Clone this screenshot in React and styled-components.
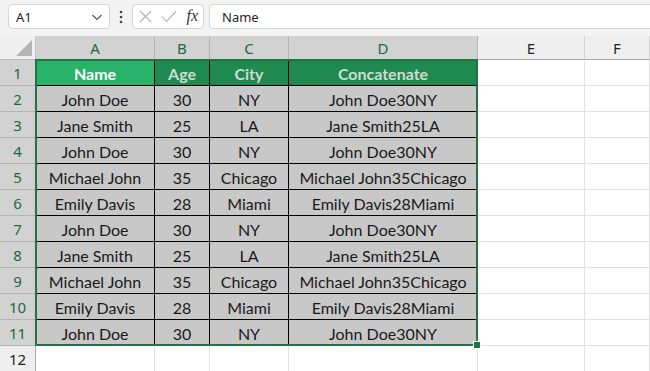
import React from "react";
import styled, { createGlobalStyle } from "styled-components";

const Global = createGlobalStyle`
  html, body { margin: 0; padding: 0; background: #ffffff; }
  body { font-family: "Lato", "Noto Sans", sans-serif; overflow: hidden; }
`;

const Root = styled.div`
  width: 650px;
  height: 371px;
  overflow: hidden;
  background: #ffffff;
`;

const FormulaBar = styled.div`
  height: 36px;
  box-sizing: border-box;
  background: #f3f3f3;
  display: flex;
  align-items: flex-start;
  padding: 4px 0 0 8px;
`;

const Box = styled.div`
  height: 25px;
  box-sizing: border-box;
  background: #ffffff;
  border: 1px solid #d6d6d6;
  border-radius: 4px;
  display: flex;
  align-items: center;
  font-family: "Noto Sans", "Open Sans", sans-serif;
  font-size: 13px;
  color: #1f1f1f;
`;

const NameBox = styled(Box)`
  width: 102px;
  padding: 0 6px 0 7px;
  justify-content: space-between;
`;

const FxBox = styled(Box)`
  width: 72px;
  padding: 0 5px 0 6px;
  justify-content: space-between;
`;

const FormulaInput = styled(Box)`
  flex: 1;
  margin-left: 5px;
  padding-left: 12px;
  border-right: none;
  border-radius: 4px 0 0 4px;
`;

const Dots = styled.div`
  width: 22px;
  height: 25px;
  display: flex;
  align-items: center;
  justify-content: center;
`;

const Fx = styled.span`
  font-family: "Liberation Serif", "DejaVu Serif", serif;
  font-style: italic;
  font-size: 16px;
  color: #333;
  line-height: 1;
  padding-bottom: 2px;
`;

const Sheet = styled.div`
  position: relative;
  display: grid;
  grid-template-columns: 36px 119px 55px 79px 189px 107px 1fr;
  grid-template-rows: 24px repeat(12, 26px);
`;

const Corner = styled.div`
  background: #efefef;
  border-right: 1px solid #c8c8c8;
  border-bottom: 1px solid #bdbdbd;
  position: relative;
  overflow: hidden;
  &::after {
    content: "";
    position: absolute;
    right: 3px;
    bottom: 3px;
    width: 0;
    height: 0;
    border-left: 16px solid transparent;
    border-bottom: 16px solid #b4b4b4;
  }
`;

const ColHead = styled.div`
  box-sizing: border-box;
  background: ${(p) => (p.$sel ? "#d2d2d2" : "#efefef")};
  color: ${(p) => (p.$sel ? "#1a6b40" : "#1f1f1f")};
  border-right: 1px solid ${(p) => (p.$sel ? "#b4b4b4" : "#d4d4d4")};
  border-bottom: 1px solid #a9a9a9;
  display: flex;
  align-items: center;
  justify-content: center;
  font-family: "Noto Sans", "Open Sans", sans-serif;
  font-size: 15px;
  padding-top: 1px;
`;

const RowHead = styled.div`
  box-sizing: border-box;
  background: ${(p) => (p.$sel ? "#d2d2d2" : "#efefef")};
  color: ${(p) => (p.$sel ? "#1a6b40" : "#1f1f1f")};
  border-right: 1px solid #a9a9a9;
  border-bottom: 1px solid ${(p) => (p.$sel ? "#b4b4b4" : "#d4d4d4")};
  display: flex;
  align-items: center;
  justify-content: center;
  font-family: "Noto Sans", "Open Sans", sans-serif;
  font-size: 15px;
`;

const Cell = styled.div`
  box-sizing: border-box;
  display: flex;
  align-items: center;
  justify-content: center;
  font-family: "Lato", "Noto Sans", sans-serif;
  font-size: 16px;
  white-space: nowrap;
  overflow: hidden;
  background: ${(p) =>
    p.$kind === "active" ? "#29b36a" : p.$kind === "head" ? "#1f8a50" : p.$kind === "data" ? "#c8c8c8" : "#ffffff"};
  color: ${(p) =>
    p.$kind === "active" ? "#ffffff" : p.$kind === "head" ? "#cfdcd3" : "#1a1a1a"};
  font-weight: ${(p) => (p.$kind === "active" || p.$kind === "head" ? 700 : 400)};
  border-right: 1px solid ${(p) => (p.$kind === "empty" ? "#e1e1e1" : "#000000")};
  border-bottom: 1px solid ${(p) => (p.$kind === "empty" ? "#e1e1e1" : "#000000")};
  padding-top: 1px;
`;

const Selection = styled.div`
  position: absolute;
  left: 35px;
  top: 23px;
  width: 443px;
  height: 287px;
  box-sizing: border-box;
  border: 2px solid #217346;
  pointer-events: none;
`;

const Handle = styled.div`
  position: absolute;
  right: -5px;
  bottom: -5px;
  width: 6px;
  height: 6px;
  background: #217346;
  border: 1px solid #ffffff;
`;

const headers = ["Name", "Age", "City", "Concatenate"];
const rows = [
  ["John Doe", "30", "NY"],
  ["Jane Smith", "25", "LA"],
  ["John Doe", "30", "NY"],
  ["Michael John", "35", "Chicago"],
  ["Emily Davis", "28", "Miami"],
  ["John Doe", "30", "NY"],
  ["Jane Smith", "25", "LA"],
  ["Michael John", "35", "Chicago"],
  ["Emily Davis", "28", "Miami"],
  ["John Doe", "30", "NY"],
];

const cols = ["A", "B", "C", "D", "E", "F"];

export default function App() {
  return (
    <Root>
      <Global />
      <FormulaBar>
        <NameBox>
          <span>A1</span>
          <svg width="12" height="8" viewBox="0 0 12 8">
            <path d="M1.5 2 L6 6.5 L10.5 2" fill="none" stroke="#555" strokeWidth="1.1" />
          </svg>
        </NameBox>
        <Dots>
          <svg width="4" height="14" viewBox="0 0 4 14">
            <circle cx="2" cy="2" r="1.3" fill="#444" />
            <circle cx="2" cy="7" r="1.3" fill="#444" />
            <circle cx="2" cy="12" r="1.3" fill="#444" />
          </svg>
        </Dots>
        <FxBox>
          <svg width="13" height="13" viewBox="0 0 13 13">
            <path d="M1 1 L12 12 M12 1 L1 12" stroke="#b3b3b3" strokeWidth="1.1" fill="none" />
          </svg>
          <svg width="16" height="13" viewBox="0 0 16 13">
            <path d="M1 6.5 L5.5 11.5 L15 1.5" stroke="#b3b3b3" strokeWidth="1.1" fill="none" />
          </svg>
          <Fx>fx</Fx>
        </FxBox>
        <FormulaInput>Name</FormulaInput>
      </FormulaBar>
      <Sheet>
        <Corner />
        {cols.map((c, i) => (
          <ColHead key={c} $sel={i < 4}>
            {c}
          </ColHead>
        ))}
        <RowHead $sel>1</RowHead>
        {headers.map((h, i) => (
          <Cell key={h} $kind={i === 0 ? "active" : "head"}>
            {h}
          </Cell>
        ))}
        <Cell $kind="empty" />
        <Cell $kind="empty" />
        {rows.map((r, ri) => (
          <React.Fragment key={ri}>
            <RowHead $sel>{ri + 2}</RowHead>
            <Cell $kind="data">{r[0]}</Cell>
            <Cell $kind="data">{r[1]}</Cell>
            <Cell $kind="data">{r[2]}</Cell>
            <Cell $kind="data">{r.join("")}</Cell>
            <Cell $kind="empty" />
            <Cell $kind="empty" />
          </React.Fragment>
        ))}
        <RowHead>12</RowHead>
        {[0, 1, 2, 3, 4, 5].map((i) => (
          <Cell key={i} $kind="empty" />
        ))}
        <Selection>
          <Handle />
        </Selection>
      </Sheet>
    </Root>
  );
}
